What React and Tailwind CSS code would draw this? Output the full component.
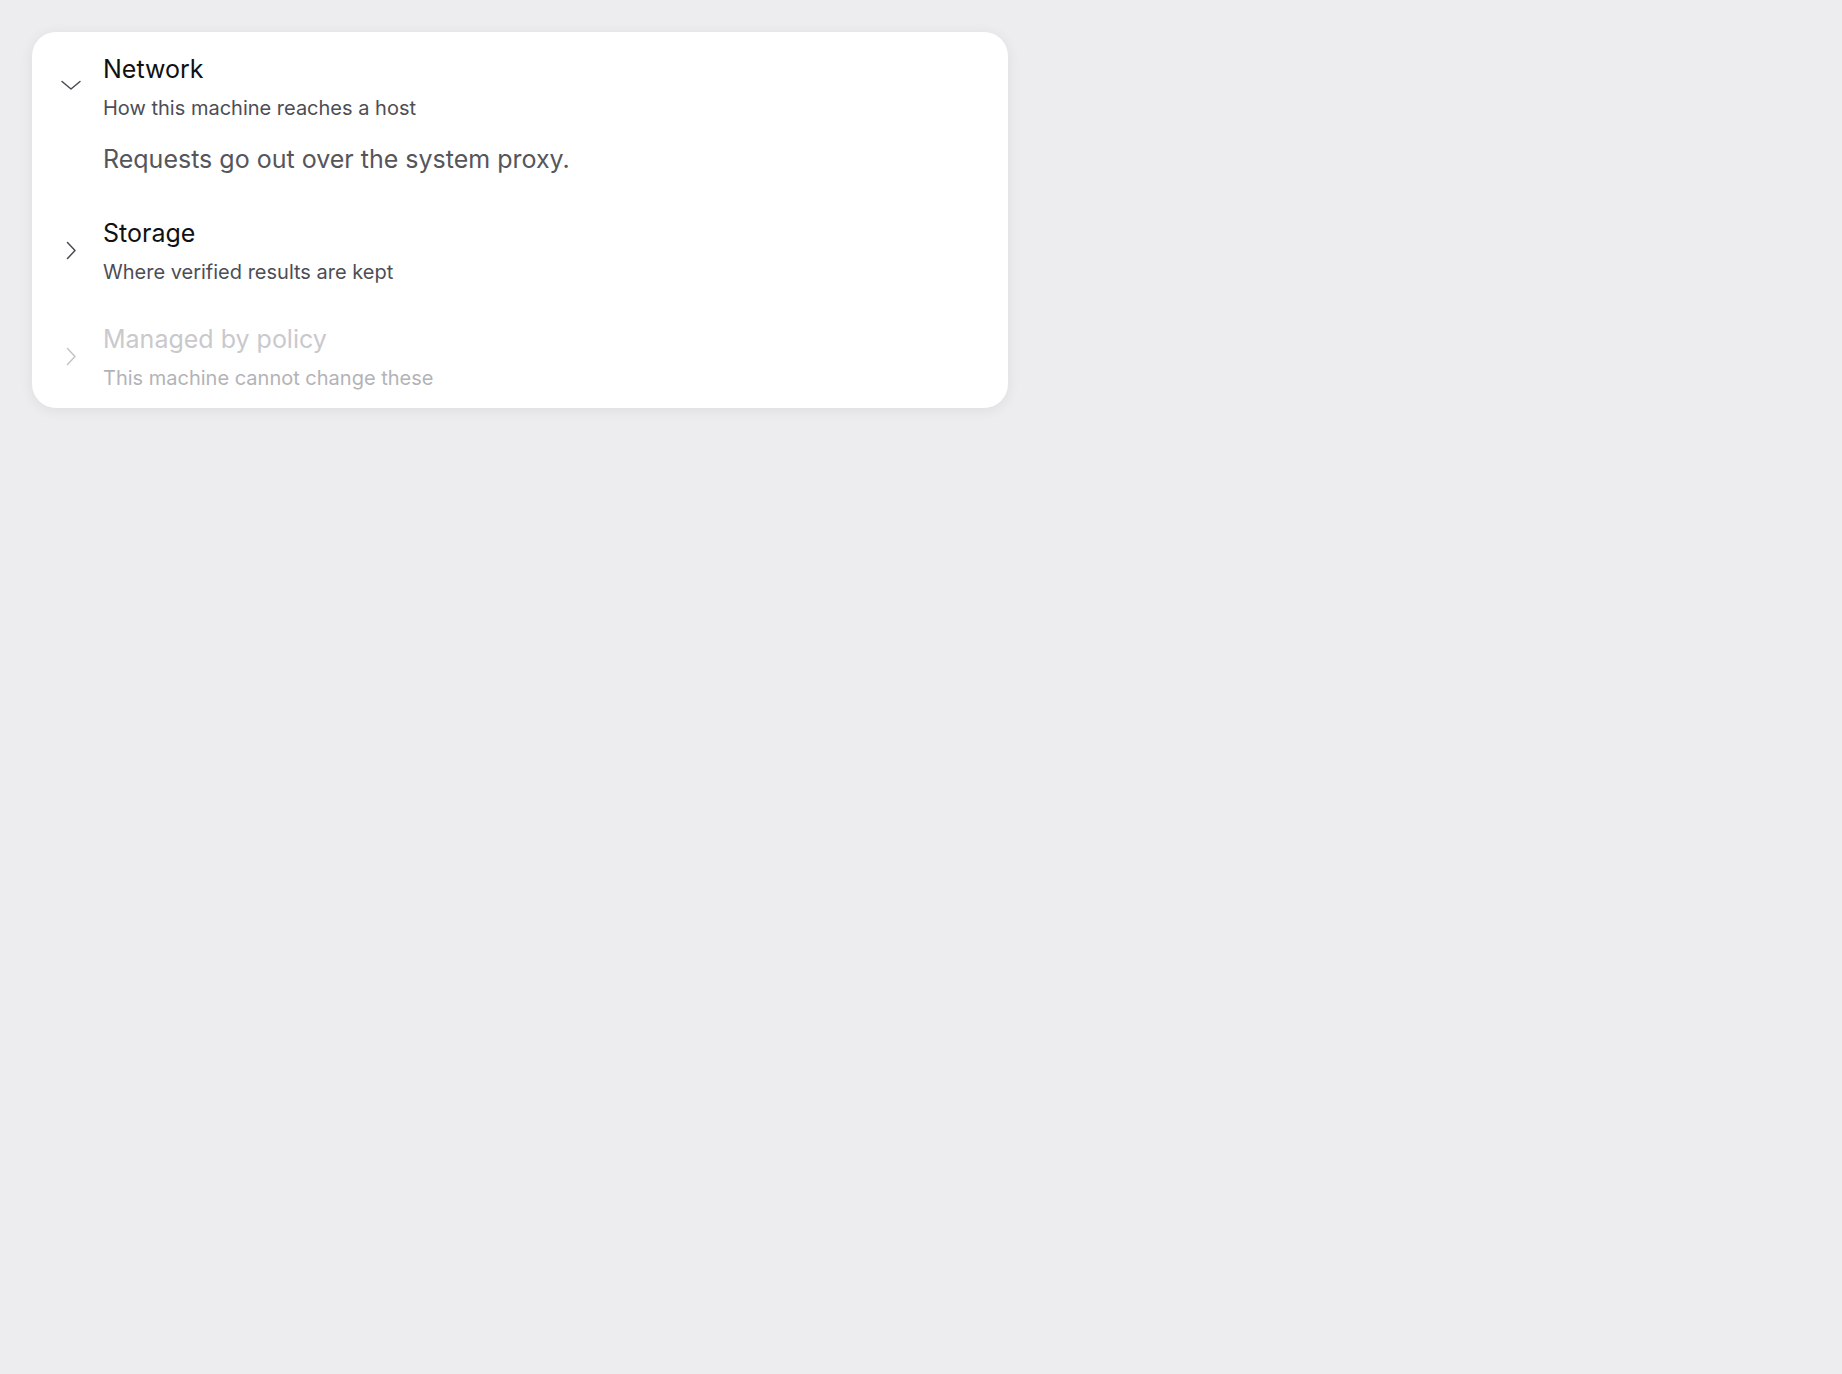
import { useState } from "react";

const sections = [
  {
    id: "network",
    title: "Network",
    hint: "How this machine reaches a host",
    body: "Requests go out over the system proxy.",
  },
  {
    id: "storage",
    title: "Storage",
    hint: "Where verified results are kept",
    body: "Results are written to the local cache.",
  },
  {
    id: "policy",
    title: "Managed by policy",
    hint: "This machine cannot change these",
    disabled: true,
  },
];

const Chevron = ({ open, className }) => (
  <svg
    width="24"
    height="24"
    viewBox="0 0 24 24"
    fill="none"
    stroke="currentColor"
    strokeWidth="1.5"
    strokeLinecap="round"
    strokeLinejoin="round"
    className={className}
  >
    {open ? (
      <polyline points="3 6.5 12 14 21 6.5" />
    ) : (
      <polyline points="8.5 3.5 16 11.5 8.5 19.5" />
    )}
  </svg>
);

const App = () => {
  const [openId, setOpenId] = useState("network");

  return (
    <div className="min-h-screen bg-[#ededef] p-8 font-['Inter','Noto_Sans',sans-serif]">
      <div className="w-[976px] rounded-[24px] bg-white shadow-[0_2px_14px_rgba(0,0,0,0.07)]">
        {sections.map((item) => {
          const open = openId === item.id;
          return (
            <div key={item.id}>
              <button
                type="button"
                disabled={item.disabled}
                onClick={() => setOpenId(open ? null : item.id)}
                className="flex w-full items-center gap-5 pl-[27px] pr-6 pt-[21px] pb-[18px] text-left"
              >
                <span
                  className={`flex h-6 w-6 shrink-0 items-center justify-center ${
                    item.disabled ? "text-[#c4c4c8]" : "text-[#4a4a51]"
                  }`}
                >
                  <Chevron open={open} />
                </span>
                <span className="flex flex-col">
                  <span
                    className={`text-[25px] leading-[32px] ${
                      item.disabled ? "text-[#c9c9cd]" : "text-[#111113]"
                    }`}
                  >
                    {item.title}
                  </span>
                  <span
                    className={`mt-[11px] text-[20px] leading-[24px] ${
                      item.disabled ? "text-[#b3b3b8]" : "text-[#4d4d55]"
                    }`}
                  >
                    {item.hint}
                  </span>
                </span>
              </button>
              {open && item.body && (
                <div className="pl-[71px] pr-6 pt-[5px] pb-[21px] text-[25px] leading-[32px] text-[#55555c]">
                  {item.body}
                </div>
              )}
            </div>
          );
        })}
      </div>
    </div>
  );
};

export default App;
